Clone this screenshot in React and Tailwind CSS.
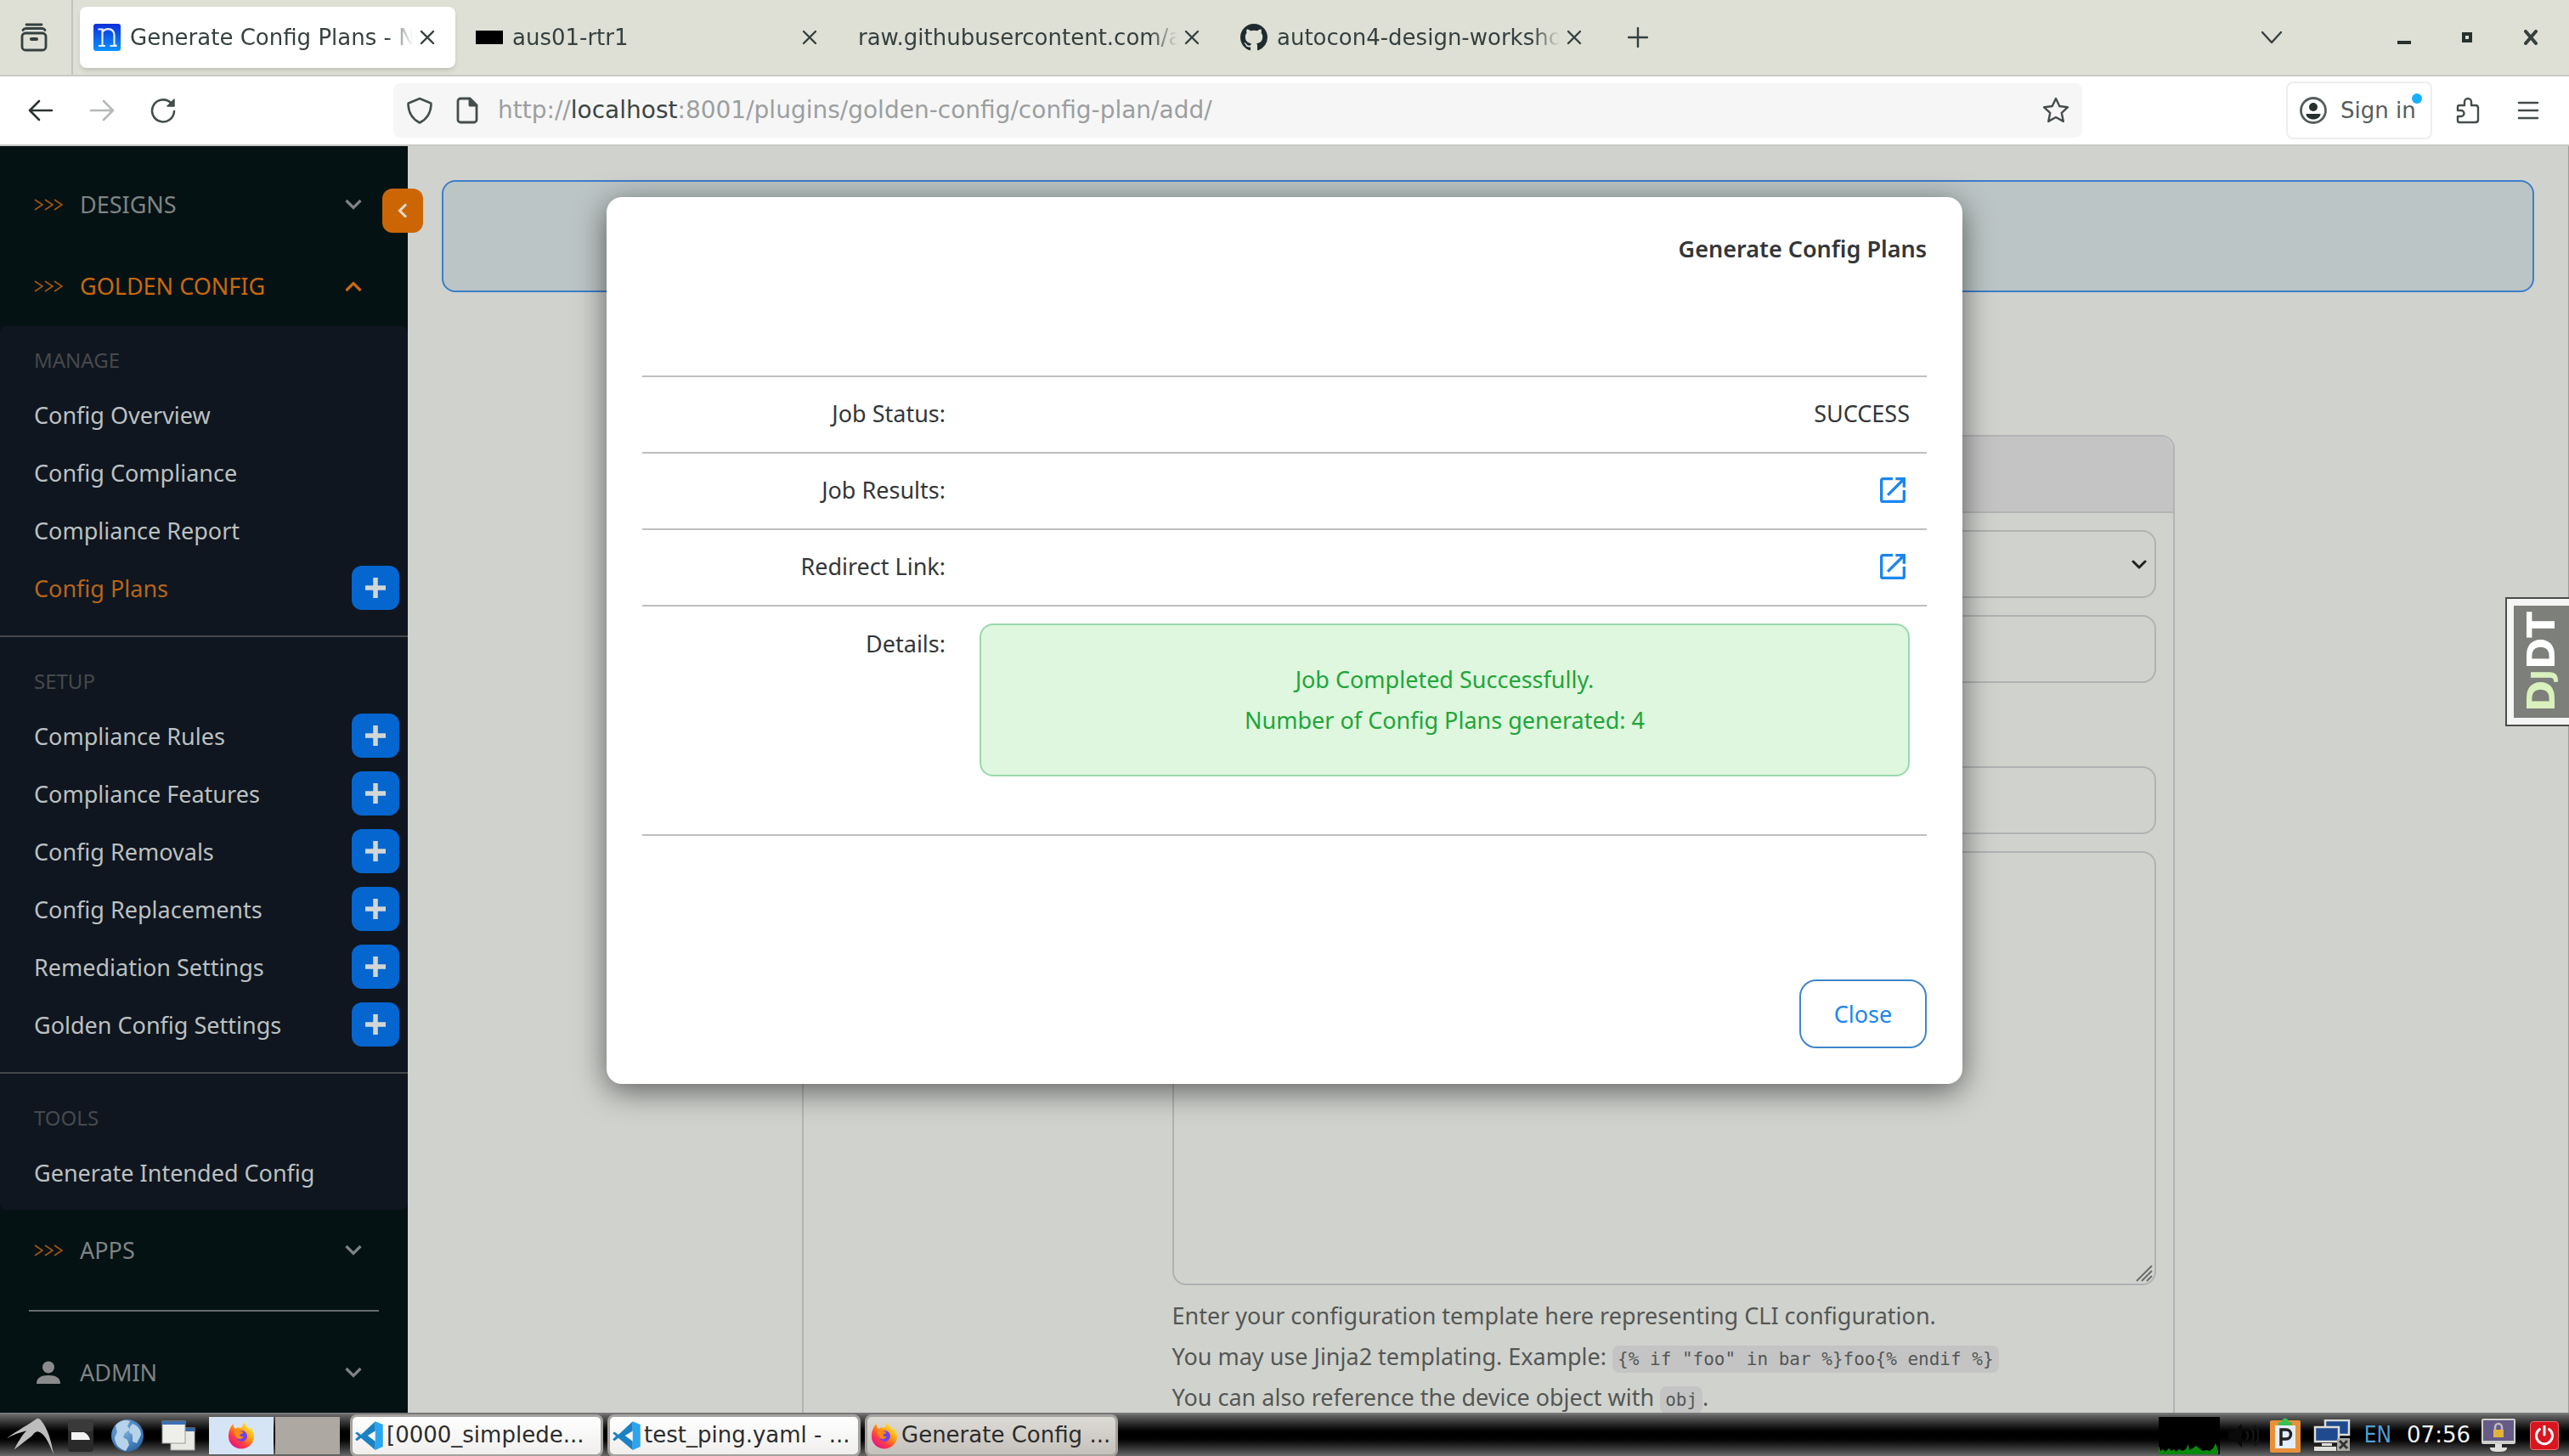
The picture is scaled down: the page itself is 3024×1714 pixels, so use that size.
import React from "react";

const CHROME_FONT = "font-['DejaVu_Sans',sans-serif]";
const PAGE_FONT = "font-['Noto_Sans',sans-serif] text-[27px]";

/* ---------- icons ---------- */

function Stroke({ className = "size-8", width = 2, children, viewBox = "0 0 32 32" }) {
  return (
    <svg viewBox={viewBox} className={className} fill="none" stroke="currentColor" strokeWidth={width} strokeLinecap="round" strokeLinejoin="round" aria-hidden="true">
      {children}
    </svg>
  );
}

const CloseX = () => (
  <Stroke className="size-[18px]" width={2.4} viewBox="0 0 18 18">
    <path d="M2 2l14 14M16 2L2 16" />
  </Stroke>
);

const ArchiveIcon = () => (
  <Stroke className="size-9" width={2.8} viewBox="0 0 36 36">
    <rect x="4" y="13" width="28" height="20" rx="4" />
    <path d="M5 9.5c1-1.800 2-2 3.500-2h19c1.500 0 2.500.2 3.500 2M9 3h18" />
    <path d="M15 20h6" strokeWidth="4" />
  </Stroke>
);

const NautobotIcon = () => (
  <svg viewBox="0 0 32 32" className="size-8" aria-hidden="true">
    <defs>
      <linearGradient id="nb" x1="0" y1="0" x2="0" y2="1">
        <stop offset="0" stopColor="#0b2fd8" />
        <stop offset="1" stopColor="#0d93ff" />
      </linearGradient>
    </defs>
    <rect width="32" height="32" rx="3" fill="url(#nb)" />
    <path d="M5.500 6.500h5v3c1.800-2.200 4-3.300 6.700-3.300 5 0 7.300 2.600 7.300 7.800v11.500h3M6 26h8M19.500 26h8M10.500 9v17" fill="none" stroke="#e8f0ff" strokeWidth="2.200" />
  </svg>
);

const GithubIcon = () => (
  <svg viewBox="0 0 16 16" className="size-8" fill="#1f2a2e" aria-hidden="true">
    <path d="M8 0C3.580 0 0 3.580 0 8c0 3.540 2.290 6.530 5.470 7.590.4.070.55-.17.55-.38 0-.19-.010-.82-.010-1.490-2.010.37-2.530-.49-2.690-.94-.090-.23-.48-.94-.82-1.130-.28-.15-.68-.52-.010-.53.63-.010 1.080.58 1.230.82.72 1.210 1.870.87 2.330.66.070-.52.28-.87.510-1.070-1.780-.2-3.640-.89-3.640-3.950 0-.87.310-1.590.82-2.150-.080-.2-.36-1.020.080-2.120 0 0 .67-.21 2.200.82.64-.18 1.320-.27 2-.27s1.360.090 2 .27c1.530-1.040 2.200-.82 2.200-.82.44 1.100.16 1.920.080 2.120.510.56.82 1.270.82 2.150 0 3.070-1.870 3.750-3.650 3.950.29.25.54.73.54 1.480 0 1.070-.010 1.930-.010 2.200 0 .21.15.46.55.38A8.010 8.010 0 0 0 16 8c0-4.420-3.580-8-8-8z" />
  </svg>
);

const BackArrow = () => (
  <Stroke className="size-8" width={2.600}>
    <path d="M3 16h26M14 5L3 16l11 11" />
  </Stroke>
);
const ForwardArrow = () => (
  <Stroke className="size-8" width={2.600}>
    <path d="M3 16h26M18 5l11 11-11 11" />
  </Stroke>
);
const ReloadIcon = () => (
  <Stroke className="size-8" width={2.600}>
    <path d="M29 17a13 13 0 1 1-4-10l3 3" />
    <path d="M29 3v8h-8z" fill="currentColor" strokeWidth="1.500" />
  </Stroke>
);
const ShieldIcon = () => (
  <Stroke className="size-8" width={2.600}>
    <path d="M16 2l12 5c1 0 1.500.8 1.500 2C29 19 25 26 16 30.500 7 26 3 19 2.500 9c0-1.200.5-2 1.500-2z" />
  </Stroke>
);
const PageIcon = () => (
  <Stroke className="size-8" width={2.800}>
    <path d="M8 2h11l8 8v17a3 3 0 0 1-3 3H8a3 3 0 0 1-3-3V5a3 3 0 0 1 3-3z" />
    <path d="M19 2v8h8z" fill="currentColor" />
  </Stroke>
);
const StarIcon = () => (
  <Stroke className="size-8" width={2.400}>
    <path d="M16 2l4.300 9 9.700 1.200-7.200 6.700 2 10L16 24l-8.800 4.900 2-10L2 12.200 11.700 11z" />
  </Stroke>
);
const AccountIcon = () => (
  <svg viewBox="0 0 32 32" className="size-8" aria-hidden="true">
    <circle cx="16" cy="16" r="14.500" fill="none" stroke="currentColor" strokeWidth="2.800" />
    <circle cx="16" cy="12" r="5" fill="#26312f" />
    <path d="M7.500 20h17c0 4-4 6.500-8.500 6.500S7.500 24 7.500 20z" fill="#26312f" />
  </svg>
);
const PuzzleIcon = () => (
  <Stroke className="size-8" width={2.400}>
    <path d="M4 12c0-1.500.5-2 2-2h6V6a4 4 0 0 1 8 0v4h5c2 0 3 1 3 3v14c0 2-1 3-3 3H6c-1.500 0-2-.5-2-2v-5h4a3.500 3.500 0 0 0 0-7H4z" />
  </Stroke>
);
const MenuIcon = () => (
  <Stroke className="size-8" width={2.600}>
    <path d="M5 7h22M5 16h22M5 25h22" />
  </Stroke>
);

const TripleChevron = () => (
  <svg viewBox="0 0 34 14" className="h-[14px] w-[34px] shrink-0" fill="none" stroke="#a4570f" strokeWidth="1.600" aria-hidden="true">
    <path d="M1 1l9 6-9 6M13 1l9 6-9 6M24 1l9 6-9 6" />
  </svg>
);
const Chevron = ({ up }) => (
  <svg viewBox="0 0 20 14" className="h-[14px] w-5" fill="none" stroke="currentColor" strokeWidth="3.200" aria-hidden="true">
    <path d={up ? "M1.500 12L10 3.500 18.500 12" : "M1.500 2L10 10.500 18.500 2"} />
  </svg>
);
const UserIcon = () => (
  <svg viewBox="0 0 28 28" className="size-7" fill="#8a8c8c" aria-hidden="true">
    <circle cx="14" cy="7.500" r="7" />
    <path d="M0 27c0-7 5-10 14-10s14 3 14 10z" />
  </svg>
);
const OpenInNew = () => (
  <svg viewBox="0 0 24 24" className="size-10" fill="#1c86ee" aria-hidden="true">
    <path d="M14 3v2h3.590l-9.830 9.830 1.410 1.410L19 6.410V10h2V3m-2 16H5V5h7V3H5c-1.110 0-2 .89-2 2v14a2 2 0 0 0 2 2h14a2 2 0 0 0 2-2v-7h-2v7z" />
  </svg>
);

const FirefoxIcon = () => (
  <svg viewBox="0 0 32 32" className="size-8 shrink-0" aria-hidden="true">
    <defs>
      <linearGradient id="ffx" x1="0.850" y1="0.100" x2="0.200" y2="0.950">
        <stop offset="0" stopColor="#fff04a" />
        <stop offset="0.400" stopColor="#ff980e" />
        <stop offset="0.700" stopColor="#ff3b47" />
        <stop offset="1" stopColor="#e31587" />
      </linearGradient>
    </defs>
    <path d="M20 0c-3 3-2 5-4 7-3-1-6 0-7 1C7 6 6.500 4 7 2 3 5 1 11 1 17c0 8 6.500 14.500 15 14.500S31 25 31 17c0-5-2-9-5-11 .5 1.500.5 2.500 0 3.500C24 6 20 4 20 0z" fill="url(#ffx)" />
    <circle cx="16.500" cy="16.500" r="6.500" fill="#7542e5" />
    <path d="M8 9c3-.5 5 .5 6 2 3-.5 4 .5 4 1.500s-2 1.500-3.500 2c-.5 2 1.500 3 4 2.500-1 3-5 4-8 1.500C8 16 7 12 8 9z" fill="#ff8a16" />
  </svg>
);
const VsCodeIcon = () => (
  <svg viewBox="0 0 32 32" className="size-9 shrink-0" aria-hidden="true">
    <path d="M22 1L7 15l-4-3-2 1.500 3.500 3L1 20l2 1.500 4-3L22 31V22l-8-6 8-5z" fill="#1b81c4" />
    <path d="M22 1l8 3.500v23L22 31z" fill="#2ba6ee" />
  </svg>
);

/* ---------- browser chrome ---------- */

const TABS = [
  { title: "Generate Config Plans - N", icon: <NautobotIcon />, active: true },
  { title: "aus01-rtr1", icon: <span className="h-4 w-8 bg-black" /> },
  { title: "raw.githubusercontent.com/a" },
  { title: "autocon4-design-worksho", icon: <GithubIcon /> },
];

function Tab({ title, icon, active }) {
  return (
    <div className={`flex h-[72px] w-[442px] items-center rounded-lg px-4 ${active ? "bg-white shadow-md" : ""}`}>
      {icon && <span className="mr-[11px] flex shrink-0">{icon}</span>}
      <span className="min-w-0 flex-1 overflow-hidden whitespace-nowrap [mask-image:linear-gradient(to_right,black_calc(100%-32px),transparent)]">{title}</span>
      <button type="button" aria-label={`Close ${title}`} className="flex w-[34px] shrink-0 justify-center">
        <CloseX />
      </button>
    </div>
  );
}

function TabBar() {
  return (
    <div className="flex h-[90px] shrink-0 items-center border-b-2 border-[#c9c9c6] bg-[#dedfd5] text-[#35403f]">
      <button type="button" aria-label="Recent browsing" className="flex w-[84px] justify-center pr-1">
        <ArchiveIcon />
      </button>
      <div className="mr-2 w-[2px] self-stretch bg-[#c3c4bd]" />
      <div className="flex gap-2">
        {TABS.map((t) => (
          <Tab key={t.title} {...t} />
        ))}
      </div>
      <button type="button" aria-label="New tab" className="ml-[30px]">
        <Stroke className="size-6" width={2.400} viewBox="0 0 24 24">
          <path d="M1 12h22M12 1v22" />
        </Stroke>
      </button>
      <div className="ml-auto flex items-center pr-9">
        <button type="button" aria-label="List all tabs" className="mr-[136px]">
          <Stroke className="h-4 w-6" width={2.400} viewBox="0 0 24 16">
            <path d="M1 2l11 12L23 2" />
          </Stroke>
        </button>
        <button type="button" aria-label="Minimize" className="mr-[60px] flex h-4 w-4 items-end">
          <span className="h-1 w-4 bg-[#26312f]" />
        </button>
        <button type="button" aria-label="Maximize" className="mr-[60px] size-3 border-4 border-[#26312f]" />
        <button type="button" aria-label="Close window">
          <Stroke className="h-[18px] w-[18px]" width={4} viewBox="0 0 18 18">
            <path d="M3 2l12 14M15 2L3 16" />
          </Stroke>
        </button>
      </div>
    </div>
  );
}

function Toolbar() {
  return (
    <div className="flex h-[82px] shrink-0 items-center border-b-2 border-[#c9c9c6] bg-white text-[#454d4d]">
      <div className="flex w-[463px] shrink-0 items-center gap-10 pl-8">
        <button type="button" aria-label="Back" className="text-[#2b3433]"><BackArrow /></button>
        <button type="button" aria-label="Forward" className="text-[#b5b8b8]"><ForwardArrow /></button>
        <button type="button" aria-label="Reload"><ReloadIcon /></button>
      </div>
      <div className="flex h-16 flex-1 items-center rounded-lg bg-[#f6f6f6] px-[15px]">
        <ShieldIcon />
        <span className="ml-6 flex"><PageIcon /></span>
        <span className="ml-5 flex-1 whitespace-nowrap text-[28px] text-[#9b9fa0]">
          http://<span className="text-[#3c4545]">localhost</span>:8001/plugins/golden-config/config-plan/add/
        </span>
        <button type="button" aria-label="Bookmark this page"><StarIcon /></button>
      </div>
      <div className="ml-60 flex items-center pr-8">
        <button type="button" className="relative flex h-[68px] w-[172px] items-center rounded-lg border-2 border-[#f1edef] pl-[14px] text-[#565d5d]">
          <AccountIcon />
          <span className="ml-4 whitespace-nowrap">Sign in</span>
          <span className="absolute right-[10px] top-3 size-3 rounded-full bg-[#17b0ff]" />
        </button>
        <button type="button" aria-label="Extensions" className="ml-[26px]"><PuzzleIcon /></button>
        <button type="button" aria-label="Menu" className="ml-[39px]"><MenuIcon /></button>
      </div>
    </div>
  );
}

/* ---------- sidebar ---------- */

const SECTIONS = [
  {
    heading: "MANAGE",
    items: [
      { label: "Config Overview" },
      { label: "Config Compliance" },
      { label: "Compliance Report" },
      { label: "Config Plans", add: true, active: true },
    ],
  },
  {
    heading: "SETUP",
    items: [
      { label: "Compliance Rules", add: true },
      { label: "Compliance Features", add: true },
      { label: "Config Removals", add: true },
      { label: "Config Replacements", add: true },
      { label: "Remediation Settings", add: true },
      { label: "Golden Config Settings", add: true },
    ],
  },
  { heading: "TOOLS", items: [{ label: "Generate Intended Config" }] },
];

function MenuGroup({ label, icon, open }) {
  return (
    <button type="button" aria-expanded={!!open} className={`flex h-24 w-full items-center pl-10 pr-[54px] pt-[2px] text-left ${open ? "text-[#c9680c]" : "text-[#7f8383]"}`}>
      <span className="flex w-[54px] shrink-0">{icon}</span>
      <span className="flex-1">{label}</span>
      <Chevron up={open} />
    </button>
  );
}

function Sidebar() {
  return (
    <nav className="relative flex w-[480px] shrink-0 flex-col bg-[#051214] pt-5">
      <MenuGroup label="DESIGNS" icon={<TripleChevron />} />
      <MenuGroup label="GOLDEN CONFIG" icon={<TripleChevron />} open />
      <div className="rounded-lg bg-[#0f161f]">
        {SECTIONS.map((s, i) => (
          <section key={s.heading} className={i === 0 ? "pt-3 pb-5" : i === 1 ? "border-t-2 border-[#45484b] pt-6 pb-5" : "border-t-2 border-[#45484b] pt-6 pb-2"}>
            <h2 className="flex h-[60px] items-center pb-[3px] pl-10 text-[24px] text-[#46494b]">{s.heading}</h2>
            <ul>
              {s.items.map((it) => (
                <li key={it.label} className="flex h-[68px] items-center justify-between pb-[2px] pl-10 pr-[10px]">
                  <a href="#" className={it.active ? "text-[#b8651a]" : "text-[#bcc0c1]"}>{it.label}</a>
                  {it.add && (
                    <button type="button" aria-label={`Add ${it.label}`} className="mb-[2px] flex h-[52px] w-14 items-center justify-center rounded-xl bg-[#0566d0] text-[#d3d6d6]">
                      <svg viewBox="0 0 26 26" className="size-6" fill="none" stroke="currentColor" strokeWidth="6" aria-hidden="true">
                        <path d="M0 13h26M13 0v26" />
                      </svg>
                    </button>
                  )}
                </li>
              ))}
            </ul>
          </section>
        ))}
      </div>
      <MenuGroup label="APPS" icon={<TripleChevron />} />
      <hr className="mx-[34px] my-[23px] border-t-2 border-[#686c6c]" />
      <MenuGroup label="ADMIN" icon={<span className="ml-[3px] flex"><UserIcon /></span>} />
      <button type="button" aria-label="Collapse sidebar" className="absolute -right-[18px] top-[50px] flex h-[52px] w-12 items-center justify-center rounded-xl bg-[#cc6605] text-[#e3dccf]">
        <svg viewBox="0 0 12 18" className="h-[18px] w-3" fill="none" stroke="currentColor" strokeWidth="3" aria-hidden="true">
          <path d="M10 1.500L2.500 9l7.500 7.500" />
        </svg>
      </button>
    </nav>
  );
}

/* ---------- page content ---------- */

const FIELD = "block w-full rounded-2xl border-2 border-[#b1b1b3] bg-transparent px-5";
const CODE = "rounded-lg bg-[#c4c4c5] px-[6px] py-1 font-['DejaVu_Sans_Mono',monospace] text-[21px] leading-none";

function PlanForm() {
  return (
    <form className="mx-auto mt-[168px] w-full max-w-[1616px] flex-1 rounded-t-2xl border-2 border-b-0 border-[#b3b3b5]">
      <div className="h-[90px] rounded-t-2xl border-b-2 border-[#b3b3b5] bg-[#c4c4c5]" />
      <div className="ml-auto w-[1178px] max-w-full pr-5 pt-5">
        <div className="relative text-[#222]">
          <select aria-label="Plan type" className={`${FIELD} h-20 appearance-none`} />
          <Stroke className="absolute right-[11px] top-[35px] h-3 w-[18px]" width={3} viewBox="0 0 18 12">
            <path d="M2 2l7 7 7-7" />
          </Stroke>
        </div>
        <input type="text" aria-label="Change control ID" className={`${FIELD} mt-5 h-20`} />
        <input type="text" aria-label="Change control URL" className={`${FIELD} mt-[98px] h-20`} />
        <div className="relative mt-5">
          <textarea aria-label="Commands" className={`${FIELD} h-[511px] resize-none`} />
          <svg viewBox="0 0 20 20" className="absolute bottom-1 right-1 size-5" stroke="#6b6d6b" strokeWidth="2" aria-hidden="true">
            <path d="M1 19L19 1M7 19L19 7M13 19l6-6" />
          </svg>
        </div>
        <p className="mt-3 whitespace-nowrap leading-[48px] text-[#545754]">
          Enter your configuration template here representing CLI configuration.
          <br />
          You may use Jinja2 templating. Example: <code className={CODE}>{'{% if "foo" in bar %}foo{% endif %}'}</code>
          <br />
          You can also reference the device object with <code className={CODE}>obj</code>.
        </p>
      </div>
    </form>
  );
}

function DebugHandle() {
  return (
    <button type="button" aria-label="Show debug toolbar" className="absolute right-0 top-[531px] flex h-[152px] w-[75px] border-2 border-r-0 border-[#4a4c4a] bg-[#f4f5f4] py-2 pl-2">
      <span className="flex flex-1 rotate-180 items-center justify-center bg-[#7d7f7b] font-['DejaVu_Sans',sans-serif] text-[45px] font-bold leading-none text-white [writing-mode:vertical-rl]">
        <span>
          <span className="text-[#d9f2bd]">D<span className="text-[34px]">J</span></span>DT
        </span>
      </span>
    </button>
  );
}

function ResultRow({ label, children }) {
  return (
    <tr className="h-[90px] border-t-2 border-[#bfbfbf]">
      <th scope="row" className="w-[377px] px-5 pb-[2px] text-right align-middle font-normal">{label}</th>
      <td className="px-5 pb-[2px] text-right align-middle">{children}</td>
    </tr>
  );
}

function ResultDialog() {
  return (
    <div className="absolute inset-x-0 top-[60px] flex justify-center">
      <div role="dialog" aria-labelledby="dialog-title" className="w-full max-w-[1596px] rounded-[18px] bg-white px-[42px] pb-[42px] pt-[37px] text-[#343638] shadow-[0_8px_36px_rgba(0,0,0,0.55)]">
        <h1 id="dialog-title" className="text-right font-semibold leading-[48px]">Generate Config Plans</h1>
        <table className="mt-[125px] w-full border-collapse border-b-2 border-[#bfbfbf]">
          <tbody>
            <ResultRow label="Job Status:">SUCCESS</ResultRow>
            <ResultRow label="Job Results:">
              <a href="#" aria-label="Job results" className="inline-block align-middle"><OpenInNew /></a>
            </ResultRow>
            <ResultRow label="Redirect Link:">
              <a href="#" aria-label="Redirect link" className="inline-block align-middle"><OpenInNew /></a>
            </ResultRow>
            <tr className="h-[270px] border-t-2 border-[#bfbfbf]">
              <th scope="row" className="px-5 pt-5 text-right align-top font-normal leading-[48px]">Details:</th>
              <td className="px-5 pt-5 align-top">
                <div className="rounded-2xl border-2 border-[#9ad8ae] bg-[#def7de] py-10 text-center leading-[48px] text-[#21a53a]">
                  Job Completed Successfully.
                  <br />
                  Number of Config Plans generated: 4
                </div>
              </td>
            </tr>
          </tbody>
        </table>
        <div className="mt-[169px] flex justify-end">
          <button type="button" className="h-[81px] w-[150px] rounded-[20px] border-2 border-[#3f86cc] text-[#1c86ee]">Close</button>
        </div>
      </div>
    </div>
  );
}

/* ---------- desktop panel ---------- */

function Task({ icon, label, active }) {
  return (
    <button type="button" className={`flex h-[50px] w-[298px] items-center gap-[2px] rounded-lg border-[3px] border-[#a5a29e] px-[2px] whitespace-nowrap text-[#2c2c2c] ${active ? "bg-linear-to-b from-[#dddbd6] to-[#c5c1bb]" : "bg-linear-to-b from-white to-[#f0efee]"}`}>
      <span className="flex w-9 shrink-0 justify-center">{icon}</span>
      <span className="pb-[2px]">{label}</span>
    </button>
  );
}

function Taskbar() {
  return (
    <footer className="flex h-[51px] shrink-0 items-center border-t-2 border-[#77777a] bg-linear-to-b from-[#6a6a6a] via-black to-[#6a6a6a] text-[26px]">
      <div className="flex items-center pl-2">
        <svg viewBox="0 0 60 46" className="h-[46px] w-[58px]" aria-hidden="true">
          <path d="M0 26C14 16 26 10 37 2c2 0 4 1 5 3 8 10 12 24 15 41-7-18-12-26-19-28-3 0-5 2-7 5L9 40c4-8 9-17 15-23C16 19 8 22 0 26z" fill="#bdbdbd" />
        </svg>
        <svg viewBox="0 0 34 42" className="ml-3 h-[42px] w-[34px]" aria-hidden="true">
          <rect x="2" y="2" width="30" height="38" rx="4" fill="#2a2a2a" />
          <rect x="2" y="2" width="30" height="14" rx="4" fill="#3a3a3a" />
          <path d="M6 17h15c4 2 6 5 7 9H6z" fill="#f2f2f2" />
        </svg>
        <svg viewBox="0 0 40 40" className="ml-[18px] size-10" aria-hidden="true">
          <defs>
            <radialGradient id="globe" cx="0.400" cy="0.350" r="0.700">
              <stop offset="0" stopColor="#7fb0dc" />
              <stop offset="1" stopColor="#2c66a8" />
            </radialGradient>
          </defs>
          <circle cx="20" cy="20" r="19" fill="url(#globe)" />
          <path d="M6 8c5-6 12-7 17-5l-3 6 3 4-6 4-2 5 5 3 2 6-4 7C8 35 5 28 5 22l3-6zM26 6c6 2 10 7 10 13l-5 10-5-2 0-8-4-3 1-6z" fill="#b6d3ea" />
        </svg>
        <svg viewBox="0 0 40 36" className="ml-5 h-9 w-10" aria-hidden="true">
          <rect x="11" y="9" width="28" height="26" fill="#e9e9e4" stroke="#aaa" />
          <rect x="11" y="9" width="28" height="4" fill="#3465a4" />
          <rect x="1" y="1" width="27" height="26" fill="#eeeeea" stroke="#999" />
          <rect x="1" y="1" width="27" height="4" fill="#3b6fb5" />
        </svg>
        <button type="button" aria-label="Desktop 1" className="ml-4 flex h-11 w-[76px] items-center justify-center bg-[#d6e5f6]"><FirefoxIcon /></button>
        <button type="button" aria-label="Desktop 2" className="ml-[2px] h-11 w-[76px] bg-[#aea8a2]" />
      </div>
      <div className="ml-3 flex gap-[5px]">
        <Task icon={<VsCodeIcon />} label="[0000_simplede..." />
        <Task icon={<VsCodeIcon />} label="test_ping.yaml - ..." />
        <Task icon={<FirefoxIcon />} label="Generate Config ..." active />
      </div>
      <div className="ml-auto flex items-center pr-3">
        <svg viewBox="0 0 72 44" className="h-11 w-[72px]" aria-hidden="true">
          <rect width="72" height="44" fill="#000" />
          <path d="M0 44V34l2 6 3-2 3 3 4-4 3 3 3-2 2 3 4-3 4 2 4-2 3-6 1 7 4-2 4-3 4 3 4 3 4-1 4 1 4-3 3-6 3 8v9z" fill="#0a8a0a" />
        </svg>
        <svg viewBox="0 0 36 30" className="ml-[10px] h-[30px] w-9" aria-hidden="true">
          <path d="M0 10h7l9-9v28l-9-9H0z" fill="#0a0a0a" />
          <path d="M21 10c3 3 3 7 0 10M26 6c5 5 5 13 0 18M31 3c6 7 6 17 0 24" fill="none" stroke="#151515" strokeWidth="2.500" />
        </svg>
        <svg viewBox="0 0 38 42" className="ml-3 h-[42px] w-[38px]" aria-hidden="true">
          <rect x="1" y="3" width="36" height="38" rx="2" fill="#e8913a" />
          <rect x="7" y="9" width="24" height="27" fill="#e4eefb" />
          <path d="M11 9V5h4c0-6 8-6 8 0h4v4z" fill="#3bbf4e" />
          <path d="M14 33V14h6a5.500 5.500 0 0 1 0 11h-6" fill="none" stroke="#222" strokeWidth="3.500" />
        </svg>
        <svg viewBox="0 0 44 38" className="ml-[14px] h-[38px] w-11" aria-hidden="true">
          <rect x="14" y="1" width="28" height="17" fill="#1f4a8f" stroke="#dcdcd6" strokeWidth="2.500" />
          <rect x="2" y="9" width="28" height="17" fill="#1f4a8f" stroke="#dcdcd6" strokeWidth="2.500" />
          <path d="M10 28h12v3H10zM1 32h26v5H1z" fill="#e0e0da" />
          <rect x="28" y="22" width="15" height="15" fill="#a7a7a3" />
          <path d="M31 25l9 9M40 25l-9 9" stroke="#333" strokeWidth="3" />
        </svg>
        <span className="ml-4 pb-[2px] text-[#4d9fd4] font-['DejaVu_Sans_Condensed','DejaVu_Sans',sans-serif]">EN</span>
        <span className="ml-[18px] pb-[2px] text-[#f3f3f3]">07:56</span>
        <svg viewBox="0 0 42 42" className="ml-3 h-[42px] w-[42px]" aria-hidden="true">
          <rect x="1" y="1" width="40" height="30" rx="2" fill="#cfcfcb" />
          <rect x="3" y="3" width="36" height="24" fill="#665a86" />
          <path d="M17 14v-3a4 4 0 0 1 8 0v3" fill="none" stroke="#bbb" strokeWidth="2.500" />
          <rect x="15" y="14" width="12" height="9" fill="#e2b33a" />
          <path d="M17 31h8v4h6c0 4-3 5-10 5s-10-1-10-5h6z" fill="#dededa" />
        </svg>
        <button type="button" aria-label="Power" className="ml-4 flex size-[34px] items-center justify-center rounded-sm border border-[#f06a6a] bg-[#d9151f] text-white">
          <Stroke className="size-6" width={3} viewBox="0 0 24 24">
            <path d="M12 1v10M6.500 4.500a9.500 9.500 0 1 0 11 0" />
          </Stroke>
        </button>
      </div>
    </footer>
  );
}

export default function App() {
  return (
    <div className={`flex h-screen flex-col overflow-hidden text-[26px] leading-8 ${CHROME_FONT}`}>
      <TabBar />
      <Toolbar />
      <div className={`relative flex min-h-0 flex-1 overflow-hidden bg-[#d0d2ce] ${PAGE_FONT} leading-8`}>
        <Sidebar />
        <main className="flex min-w-0 flex-1 flex-col border-r border-[#9c9e9b] px-10 pt-10">
          <div role="status" className="h-[132px] shrink-0 rounded-2xl border-2 border-[#3b7ec8] bg-[#bcc5c5]" />
          <PlanForm />
        </main>
        <ResultDialog />
        <DebugHandle />
      </div>
      <Taskbar />
    </div>
  );
}
